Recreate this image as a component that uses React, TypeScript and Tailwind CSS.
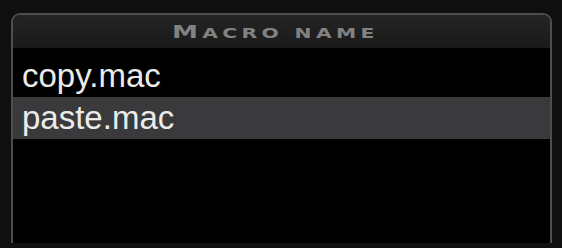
import React from "react";

export default function App() {
  const items = ["copy.mac", "paste.mac"];
  const selected = 1;
  return (
    <div className="w-[562px] h-[248px] bg-[#0f0f0f] pt-[13px] pl-[11px] overflow-hidden">
      <div className="w-[541px] h-[230px] border-[2px] border-b-0 border-[#4e4e4e] rounded-t-[9px] bg-black flex flex-col overflow-hidden">
        <div className="h-[33px] shrink-0 bg-gradient-to-b from-[#242424] to-[#1a1a1a] flex items-center justify-center">
          <span
            className="text-[#828282] font-bold tracking-[3px] leading-none pt-[1px] mr-[12px] inline-block scale-x-[1.45]"
            style={{ fontFamily: '"DejaVu Sans", sans-serif' }}
          >
            <span className="text-[18px]">M</span>
            <span className="text-[14px]">ACRO NAME</span>
          </span>
        </div>
        <div className="pt-[7px] flex flex-col">
          {items.map((it, i) => (
            <div
              key={it}
              className={
                "h-[42px] leading-[42px] pl-[9px] text-[33px] text-[#ebebeb] " +
                (i === selected ? "bg-[#3a3a3c]" : "")
              }
              style={{ fontFamily: '"Liberation Sans", Arial, sans-serif' }}
            >
              {it}
            </div>
          ))}
        </div>
      </div>
    </div>
  );
}
